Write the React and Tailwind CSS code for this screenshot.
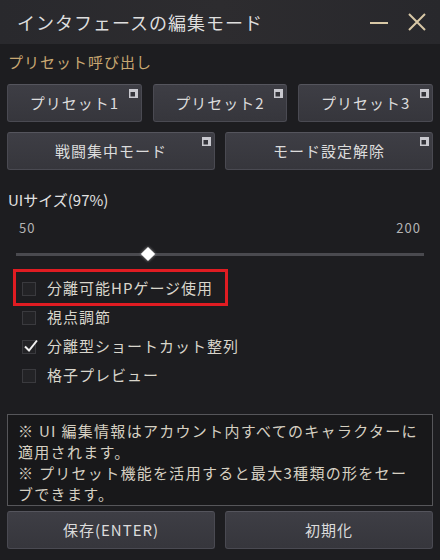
import React from 'react';

const font = { fontFamily: '"Noto Sans CJK JP", "Noto Sans", sans-serif' };

const CornerMark = () => (
    <svg className="absolute top-[4px] right-[3px]" width="9" height="9" viewBox="0 0 9 9">
        <rect x="0" y="0" width="9" height="9" fill="#c9c9cf" />
        <rect x="1.5" y="3" width="4.5" height="4.5" fill="#34343a" />
    </svg>
);

const PanelButton = ({ label, mark = true, className = '' }) => (
    <button className={`relative h-[38px] rounded-[3px] border border-[#4a4a52] border-t-[#55555d] bg-gradient-to-b from-[#3e3e45] to-[#36363c] text-[15px] tracking-[1px] text-[#dcdcdc] flex items-center justify-center ${className}`}>
        {label}
        {mark && <CornerMark />}
    </button>
);

const CheckRow = ({ label, checked }) => (
    <div className="flex items-center h-[29px] pl-[15px]">
        <span className="w-[14px] h-[14px] border border-[#3a3a3e] bg-[#232326] relative flex items-center justify-center">
            {checked && (
                <svg className="absolute -top-[3px] left-[0px]" width="16" height="16" viewBox="0 0 16 16">
                    <path d="M2 8.5 L6 12.5 L14 2.5" fill="none" stroke="#f2f2f2" strokeWidth="2" />
                </svg>
            )}
        </span>
        <span className="ml-[11px] text-[15px] tracking-[1px] text-[#d9d6cc]">{label}</span>
    </div>
);

export default function App() {
    return (
        <div style={font} className="w-[440px] h-[560px] bg-[#1d1d20] flex flex-col overflow-hidden">
            {/* title bar */}
            <div className="h-[44px] shrink-0 bg-gradient-to-r from-[#29292d] via-[#2d2c2f] to-[#28282c] flex items-center pl-[17px] pr-[14px]">
                <span className="text-[18px] tracking-[1px] text-[#dedede] flex-1">インタフェースの編集モード</span>
                <div className="w-[18px] h-[2px] bg-[#d8c8a6] mr-[20px] mt-[1px]" />
                <svg width="18" height="18" viewBox="0 0 18 18">
                    <path d="M1 1 L17 17 M17 1 L1 17" stroke="#d8c8a6" strokeWidth="2" />
                </svg>
            </div>

            <div className="px-[7px] pt-[8px] flex flex-col">
                <p className="pl-[1px] text-[15px] tracking-[1px] text-[#c9a872] leading-[20px]">プリセット呼び出し</p>

                <div className="grid grid-cols-3 gap-[11px] mt-[12px]">
                    <PanelButton label="プリセット1" />
                    <PanelButton label="プリセット2" />
                    <PanelButton label="プリセット3" />
                </div>
                <div className="grid grid-cols-2 gap-[10px] mt-[10px]">
                    <PanelButton label="戦闘集中モード" />
                    <PanelButton label="モード設定解除" />
                </div>

                <p className="pl-[1px] mt-[20px] text-[15px] text-[#e2e2e2] leading-[20px]">UIサイズ(97%)</p>
                <div className="flex justify-between px-[12px] mt-[9px] text-[13px] tracking-[1px] text-[#b4b4b4] leading-[18px]">
                    <span>50</span>
                    <span>200</span>
                </div>
                <div className="relative mx-[9px] mt-[16px] h-[3px] bg-[#4a4a4f]">
                    <div className="absolute left-[127px] top-[-4px] w-[10px] h-[10px] bg-white rotate-45 shadow-[0_0_3px_rgba(255,255,255,0.6)]" />
                </div>

                <div className="mt-[18px] flex flex-col">
                    <div className="relative">
                        <CheckRow label="分離可能HPゲージ使用" />
                        <div className="absolute left-[6px] top-[-5px] w-[215px] h-[37px] border-[3px] border-[#e01c22]" />
                    </div>
                    <CheckRow label="視点調節" />
                    <CheckRow label="分離型ショートカット整列" checked />
                    <CheckRow label="格子プレビュー" />
                </div>

                <div className="mt-[24px] h-[92px] border border-[#56565a] bg-[#18181a] px-[10px] pt-[5px] text-[15px] leading-[21px] tracking-[1.3px] text-[#d6d0c2] whitespace-nowrap">
                    <p>※ UI 編集情報はアカウント内すべてのキャラクターに<br />適用されます。</p>
                    <p>※ プリセット機能を活用すると最大3種類の形をセー<br />ブできます。</p>
                </div>

                <div className="grid grid-cols-2 gap-[10px] mt-[5px]">
                    <PanelButton label="保存(ENTER)" mark={false} />
                    <PanelButton label="初期化" mark={false} />
                </div>
            </div>
        </div>
    );
}
